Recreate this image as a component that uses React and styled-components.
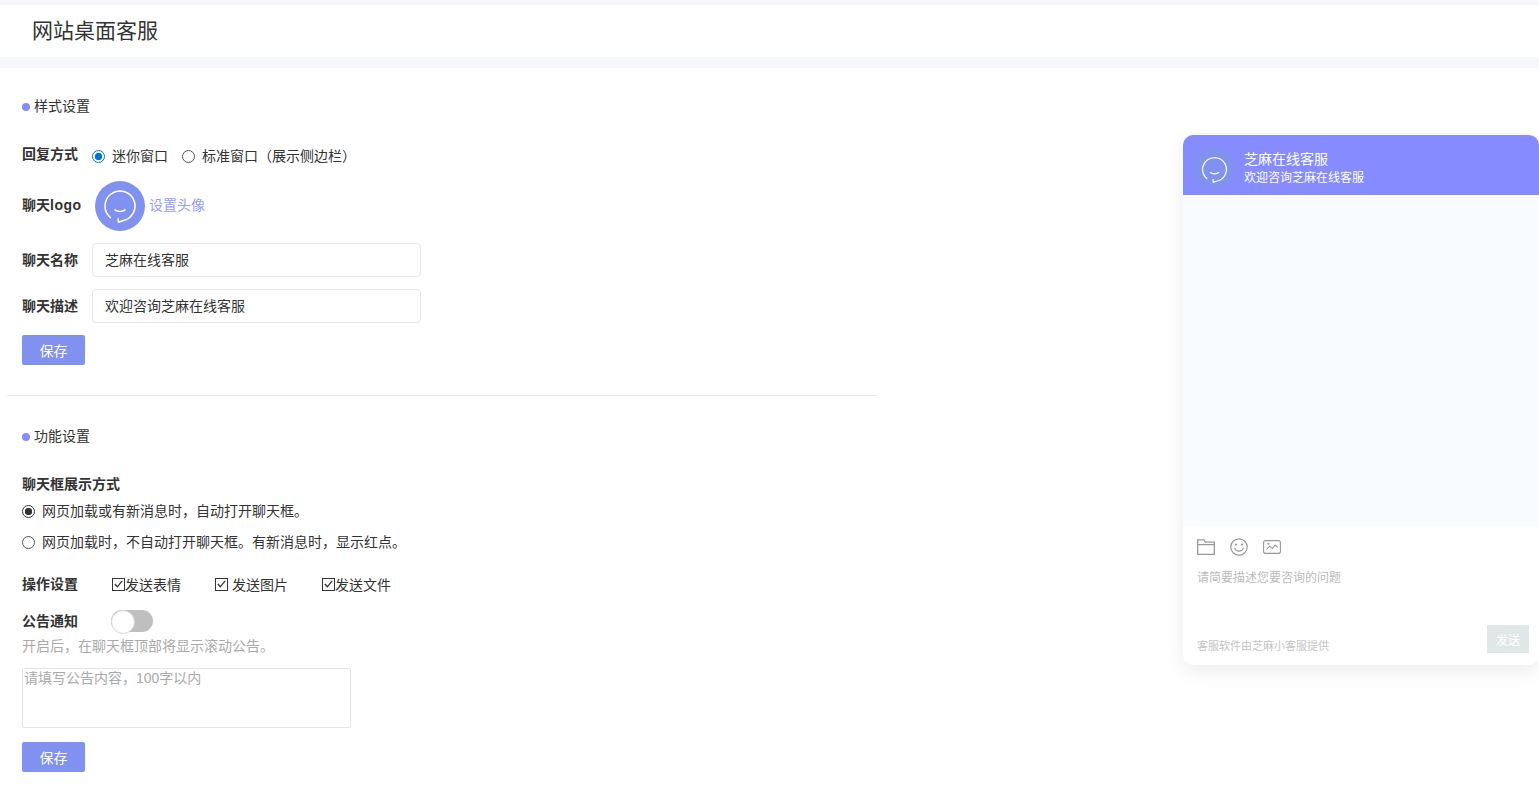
import React from 'react';
import styled, { createGlobalStyle } from 'styled-components';

const FONT = '"Liberation Sans", "Noto Sans CJK SC", sans-serif';

const GlobalStyle = createGlobalStyle`
  html, body {
    margin: 0;
    padding: 0;
    background: #fff;
    font-family: ${FONT};
    font-size: 14px;
    color: #333;
  }
  * { box-sizing: border-box; }
`;

const Page = styled.div`
  height: 803px;
  overflow: hidden;
  padding-top: 5px;
  background: #f6f7fb;
`;

const Header = styled.header`
  height: 52px;
  background: #fff;
  padding-left: 32px;
  font-size: 21px;
  line-height: 52px;
  color: #333;
`;

const Main = styled.main`
  margin-top: 11px;
  height: 735px;
  background: #fff;
  display: flex;
  justify-content: space-between;
  align-items: flex-start;
`;

const Settings = styled.div`
  width: 878px;
`;

const Section = styled.section`
  padding: ${p => p.$top}px 0 0 22px;
  height: ${p => p.$height}px;
`;

const Divider = styled.hr`
  margin: 0 0 0 7px;
  border: 0;
  border-top: 1px solid #e8e8e8;
`;

const SectionTitle = styled.div`
  display: flex;
  align-items: center;
  gap: 4px;
  height: 20px;
  font-size: 14px;
  margin-bottom: ${p => p.$gap}px;
  &::before {
    content: '';
    width: 8px;
    height: 8px;
    margin-top: 4px;
    border-radius: 50%;
    background: #868cff;
  }
`;

const Row = styled.div`
  display: flex;
  align-items: center;
  height: ${p => p.$height}px;
  margin-top: ${p => p.$before || 0}px;
  margin-bottom: ${p => p.$gap || 0}px;
`;

const Label = styled.label`
  width: ${p => p.$width || 70}px;
  flex: none;
  font-weight: 700;
  font-size: 14px;
  color: #333;
  position: relative;
  top: ${p => p.$shift || 0}px;
`;

const LatinWord = styled.span`
  letter-spacing: 0.5px;
`;

const RadioWrap = styled.label`
  display: inline-flex;
  align-items: center;
  margin-right: ${p => p.$gap || 0}px;
  font-size: 14px;
  color: #333;
  position: relative;
  top: ${p => p.$shift || 0}px;
`;

const Radio = styled.input.attrs({ type: 'radio' })`
  appearance: none;
  width: 13px;
  height: 13px;
  margin: ${p => p.$nudge}px 7px 0 0;
  border: 1.3px solid #555;
  border-radius: 50%;
  background: #fff;
  &:checked {
    border-color: ${p => p.$accent};
    background: radial-gradient(circle, ${p => p.$accent} 0 3.4px, #fff 4px);
  }
`;

const Avatar = styled.div`
  width: 50px;
  height: 50px;
  margin-left: 3px;
  border-radius: 50%;
  background: #8191f0;
  display: flex;
  align-items: center;
  justify-content: center;
`;

const AvatarLink = styled.a`
  margin-left: 4px;
  color: #959bf8;
  font-size: 14px;
  position: relative;
  top: -2px;
`;

const TextInput = styled.input`
  width: 329px;
  height: 34px;
  padding: 0 12px 2px;
  border: 1px solid #e8e8e8;
  border-radius: 4px;
  font: 14px ${FONT};
  color: #333;
  outline: none;
`;

const SaveButton = styled.button`
  display: block;
  width: 63px;
  height: 30px;
  border: 0;
  border-radius: 2px;
  background: #8191f0;
  color: #fff;
  font: 14px ${FONT};
  padding: 0;
`;

const SubTitle = styled.div`
  font-weight: 700;
  font-size: 14px;
  height: 20px;
  line-height: 20px;
`;

const ChoiceRow = styled.div`
  display: flex;
  align-items: center;
  height: 31px;
`;

const CheckItem = styled.label`
  display: inline-flex;
  align-items: center;
  width: ${p => p.$width}px;
  font-size: 14px;
  color: #333;
`;

const CheckBox = styled.span`
  width: 13px;
  height: 13px;
  margin-right: ${p => p.$gap || 0}px;
  border: 1.2px solid #333;
  display: flex;
  align-items: center;
  justify-content: center;
`;

const Toggle = styled.span`
  position: relative;
  display: block;
  width: 42px;
  height: 22px;
  margin-left: 19px;
  border-radius: 11px;
  background: #bfbfbf;
  &::after {
    content: '';
    position: absolute;
    left: 0;
    top: 0;
    width: 22px;
    height: 22px;
    border: 1px solid #d6d6d6;
    border-radius: 50%;
    background: #fff;
  }
`;

const Hint = styled.div`
  color: #aaa;
  font-size: 14px;
  height: 20px;
  line-height: 20px;
  margin-bottom: 12px;
`;

const Notice = styled.textarea`
  display: block;
  width: 329px;
  height: 60px;
  padding: 0 1px;
  margin-bottom: 14px;
  border: 1px solid #e4e4e4;
  border-radius: 2px;
  font: 14px/18px ${FONT};
  resize: none;
  outline: none;
  &::placeholder { color: #aaa; }
`;

const Widget = styled.aside`
  width: 356px;
  height: 530px;
  margin-top: 67px;
  background: #fff;
  border-radius: 10px;
  box-shadow: 0 6px 20px rgba(0, 0, 0, 0.08);
  display: flex;
  flex-direction: column;
  overflow: hidden;
`;

const WidgetHead = styled.div`
  height: 60px;
  flex: none;
  background: #868cff;
  padding-left: 10px;
  display: flex;
  align-items: center;
  gap: 9px;
  color: #fff;
`;

const WidgetLogo = styled.div`
  width: 42px;
  height: 42px;
  margin-top: 8px;
  border-radius: 50%;
  background: #8191f0;
  display: flex;
  align-items: center;
  justify-content: center;
`;

const WidgetText = styled.div`
  margin-top: 6px;
`;

const WidgetName = styled.div`
  font-size: 14px;
  line-height: 18px;
`;

const WidgetDesc = styled.div`
  font-size: 12px;
  line-height: 18px;
  margin-top: 1px;
`;

const Messages = styled.div`
  height: 331px;
  flex: none;
  background: #f8fcff;
`;

const Composer = styled.div`
  flex: 1;
  padding: 11px 10px 12px 14px;
  display: flex;
  flex-direction: column;
`;

const Tools = styled.div`
  display: flex;
  align-items: center;
  gap: 15px;
  height: 20px;
  color: #999;
`;

const Prompt = styled.div`
  margin-top: 12px;
  font-size: 12px;
  line-height: 18px;
  color: #bbb;
`;

const ComposerFoot = styled.div`
  margin-top: auto;
  display: flex;
  justify-content: space-between;
  align-items: flex-end;
`;

const Credit = styled.div`
  font-size: 11px;
  line-height: 16px;
  margin-bottom: -1px;
  color: #c4c4c4;
`;

const SendButton = styled.button`
  width: 42px;
  height: 28px;
  border: 0;
  padding: 0;
  background: #dfe8e7;
  color: #fff;
  font: 12px ${FONT};
`;

const LogoMark = ({ size }) => (
  <svg width={size} height={size} viewBox="0 0 34 34" fill="none" stroke="#fff" strokeWidth="1.5" strokeLinecap="round" strokeLinejoin="round">
    <path d="M7.5 28.6 A15 15 0 1 1 19.5 31.8 L15.4 33.2 L15.2 29.8" />
    <path d="M11.8 20.8 C14 23 20 23 22.2 20.8" />
  </svg>
);

const CheckMark = () => (
  <svg width="9" height="8" viewBox="0 0 9 8" fill="none" stroke="#333" strokeWidth="1.3">
    <path d="M0.8 4 L3.3 6.8 L8.2 0.8" />
  </svg>
);

const FolderIcon = () => (
  <svg width="18" height="16" viewBox="0 0 18 16" fill="none" stroke="currentColor" strokeWidth="1.3">
    <path d="M0.7 15.3 V0.9 H6.8 L8.4 3.2 H17.3 V15.3 Z M0.7 5.6 H17.3" />
  </svg>
);

const SmileIcon = () => (
  <svg width="18" height="18" viewBox="0 0 18 18" fill="none" stroke="currentColor" strokeWidth="1.2" strokeLinecap="round">
    <circle cx="9" cy="9" r="8.2" />
    <path d="M4.8 10.4 C6 14 12 14 13.2 10.4" />
    <circle cx="6" cy="6.5" r="0.5" />
    <circle cx="12" cy="6.5" r="0.5" />
  </svg>
);

const PictureIcon = () => (
  <svg width="18" height="14" viewBox="0 0 18 14" fill="none" stroke="currentColor" strokeWidth="1.1" strokeLinejoin="round">
    <rect x="0.6" y="0.6" width="16.8" height="12.8" rx="2" />
    <path d="M3.5 9.5 L6.6 6 L9.4 8.4 L12 5 L14.8 7.4" />
    <circle cx="5.5" cy="3.8" r="0.5" />
  </svg>
);

export default function App() {
  return (
    <Page>
      <GlobalStyle />
      <Header>网站桌面客服</Header>
      <Main>
        <Settings>
          <Section $top={27} $height={327}>
            <SectionTitle $gap={28}>样式设置</SectionTitle>
            <Row $height={26} $gap={12}>
              <Label $shift={-3}>回复方式</Label>
              <RadioWrap $gap={14} $shift={-1}>
                <Radio name="reply" $accent="#0075d9" $nudge={2} defaultChecked />
                迷你窗口
              </RadioWrap>
              <RadioWrap $shift={-1}>
                <Radio name="reply" $accent="#0075d9" $nudge={2} />
                标准窗口（展示侧边栏）
              </RadioWrap>
            </Row>
            <Row $height={50} $gap={12}>
              <Label $shift={-2}>聊天<LatinWord>logo</LatinWord></Label>
              <Avatar><LogoMark size={34} /></Avatar>
              <AvatarLink>设置头像</AvatarLink>
            </Row>
            <Row $height={34} $gap={12}>
              <Label $shift={-1}>聊天名称</Label>
              <TextInput defaultValue="芝麻在线客服" />
            </Row>
            <Row $height={34} $gap={12}>
              <Label $shift={-1}>聊天描述</Label>
              <TextInput defaultValue="欢迎咨询芝麻在线客服" />
            </Row>
            <SaveButton>保存</SaveButton>
          </Section>
          <Divider />
          <Section $top={29} $height={400}>
            <SectionTitle $gap={29}>功能设置</SectionTitle>
            <SubTitle>聊天框展示方式</SubTitle>
            <ChoiceRow>
              <RadioWrap>
                <Radio name="open" $accent="#333" $nudge={4} defaultChecked />
                网页加载或有新消息时，自动打开聊天框。
              </RadioWrap>
            </ChoiceRow>
            <ChoiceRow>
              <RadioWrap>
                <Radio name="open" $accent="#333" $nudge={4} />
                网页加载时，不自动打开聊天框。有新消息时，显示红点。
              </RadioWrap>
            </ChoiceRow>
            <Row $height={34} $before={11} $gap={7}>
              <Label $width={90} $shift={-1}>操作设置</Label>
              <CheckItem $width={103}><CheckBox><CheckMark /></CheckBox>发送表情</CheckItem>
              <CheckItem $width={107}><CheckBox $gap={4}><CheckMark /></CheckBox>发送图片</CheckItem>
              <CheckItem $width={80}><CheckBox><CheckMark /></CheckBox>发送文件</CheckItem>
            </Row>
            <Row $height={26} $gap={2}>
              <Label $shift={-1}>公告通知</Label>
              <Toggle />
            </Row>
            <Hint>开启后，在聊天框顶部将显示滚动公告。</Hint>
            <Notice placeholder="请填写公告内容，100字以内" />
            <SaveButton>保存</SaveButton>
          </Section>
        </Settings>
        <Widget>
          <WidgetHead>
            <WidgetLogo><LogoMark size={27} /></WidgetLogo>
            <WidgetText>
              <WidgetName>芝麻在线客服</WidgetName>
              <WidgetDesc>欢迎咨询芝麻在线客服</WidgetDesc>
            </WidgetText>
          </WidgetHead>
          <Messages />
          <Composer>
            <Tools>
              <FolderIcon />
              <SmileIcon />
              <PictureIcon />
            </Tools>
            <Prompt>请简要描述您要咨询的问题</Prompt>
            <ComposerFoot>
              <Credit>客服软件由芝麻小客服提供</Credit>
              <SendButton>发送</SendButton>
            </ComposerFoot>
          </Composer>
        </Widget>
      </Main>
    </Page>
  );
}
